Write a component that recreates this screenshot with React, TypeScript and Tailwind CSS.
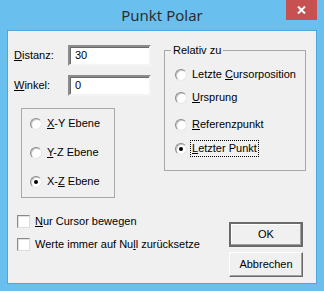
import React from "react";

const sans = "font-['Liberation_Sans',Arial,sans-serif]";

function Radio({ checked }: { checked?: boolean }) {
  return (
    <span className="relative flex items-center justify-center w-[12px] h-[12px] rounded-full border border-t-[#8a8a8a] border-l-[#8a8a8a] border-b-[#e6e6e6] border-r-[#e6e6e6] bg-white shadow-[inset_1px_1px_0_#c8c8c8]">
      {checked && <span className="w-[4px] h-[4px] rounded-full bg-black" />}
    </span>
  );
}

function RadioRow({
  children,
  checked,
  focused,
  className = "",
}: {
  children: React.ReactNode;
  checked?: boolean;
  focused?: boolean;
  className?: string;
}) {
  return (
    <div className={`flex items-center h-[17px] ${className}`}>
      <Radio checked={checked} />
      <span
        className={`ml-[3px] px-[1px] py-[1px] leading-[13px] border ${
          focused ? "border-dotted border-black" : "border-transparent"
        }`}
      >
        {children}
      </span>
    </div>
  );
}

function Check({ children, className = "" }: { children: React.ReactNode; className?: string }) {
  return (
    <div className={`flex items-center h-[13px] ${className}`}>
      <span className="w-[13px] h-[13px] bg-white border border-t-[#8a8a8a] border-l-[#8a8a8a] border-b-[#dcdcdc] border-r-[#dcdcdc] shadow-[inset_1px_1px_0_#e0e0e0]" />
      <span className="ml-[5px] leading-[13px]">{children}</span>
    </div>
  );
}

function Field({ label, value, className = "" }: { label: React.ReactNode; value: string; className?: string }) {
  return (
    <div className={`flex items-center h-[21px] ${className}`}>
      <span className="w-[54px] leading-[13px]">{label}</span>
      <div className="w-[83px] h-[21px] bg-white border-2 border-t-[#8c8c8c] border-l-[#8c8c8c] border-b-[#f4f4f4] border-r-[#f4f4f4] shadow-[inset_1px_1px_0_#6a6a6a] flex items-center pl-[5px]">
        {value}
      </div>
    </div>
  );
}

export default function App() {
  return (
    <div className={`w-[324px] h-[291px] bg-[#69c0ef] flex flex-col ${sans}`}>
      {/* title bar */}
      <div className="flex h-[30px] items-start">
        <div className="w-[38px]" />
        <div className="flex-1 text-center pt-[5px] text-[15px] leading-[20px] text-[#2e2e2e] font-['Noto_Sans','Open_Sans',sans-serif]">
          Punkt Polar
        </div>
        <div className="w-[31px] h-[20px] bg-[#c75050] flex items-center justify-center mr-[7px]">
          <svg width="9" height="8" viewBox="0 0 9 8">
            <path d="M1 0.5 L8 7.5 M8 0.5 L1 7.5" stroke="white" strokeWidth="2" />
          </svg>
        </div>
      </div>

      {/* client */}
      <div className="mx-[7px] mb-[7px] border border-[#4ea6dc] bg-[#f0f0f0] h-[254px] text-[11px] text-black">
        <div className="flex items-start">
          <div className="pl-[6px] pt-[14px]">
            <Field label={<><u>D</u>istanz:</>} value="30" />
            <Field label={<><u>W</u>inkel:</>} value="0" className="mt-[9px]" />
            <div className="mt-[12px] ml-[7px] w-[94px] h-[90px] border border-[#a8a8a8] pl-[8px] pt-[6px] flex flex-col gap-[12px]">
              <RadioRow><u>X</u>-Y Ebene</RadioRow>
              <RadioRow><u>Y</u>-Z Ebene</RadioRow>
              <RadioRow checked>X-<u>Z</u> Ebene</RadioRow>
            </div>
          </div>

          <fieldset className="ml-[13px] mt-[13px] w-[142px] h-[127px] border border-[#a8a8a8] px-0 pl-[10px] pt-[9px] pb-0 m-0">
            <legend className="ml-[-4px] px-[2px] leading-[13px]">Relativ zu</legend>
            <RadioRow>Letzte <u>C</u>ursorposition</RadioRow>
            <RadioRow className="mt-[6px]"><u>U</u>rsprung</RadioRow>
            <RadioRow className="mt-[10px]"><u>R</u>eferenzpunkt</RadioRow>
            <RadioRow checked focused className="mt-[7px]"><u>L</u>etzter Punkt</RadioRow>
          </fieldset>
        </div>

        <div className="flex items-start">
          <div className="pl-[9px] mt-[17px] flex flex-col gap-[10px]">
            <Check><u>N</u>ur Cursor bewegen</Check>
            <Check>Werte immer auf Nu<u>l</u>l zurücksetze</Check>
          </div>
          <div className="ml-auto mr-[13px] mt-[24px] flex flex-col gap-[5px]">
            <button className="w-[74px] h-[25px] bg-[#f0f0f0] border-2 border-[#6a6a6a] shadow-[inset_-1px_-1px_0_#a0a0a0,inset_1px_1px_0_#ffffff] leading-[13px]">
              OK
            </button>
            <button className="w-[74px] h-[25px] bg-[#f0f0f0] border border-t-white border-l-white border-r-[#696969] border-b-[#696969] shadow-[inset_-1px_-1px_0_#a0a0a0] leading-[13px]">
              Abbrechen
            </button>
          </div>
        </div>
      </div>
    </div>
  );
}
